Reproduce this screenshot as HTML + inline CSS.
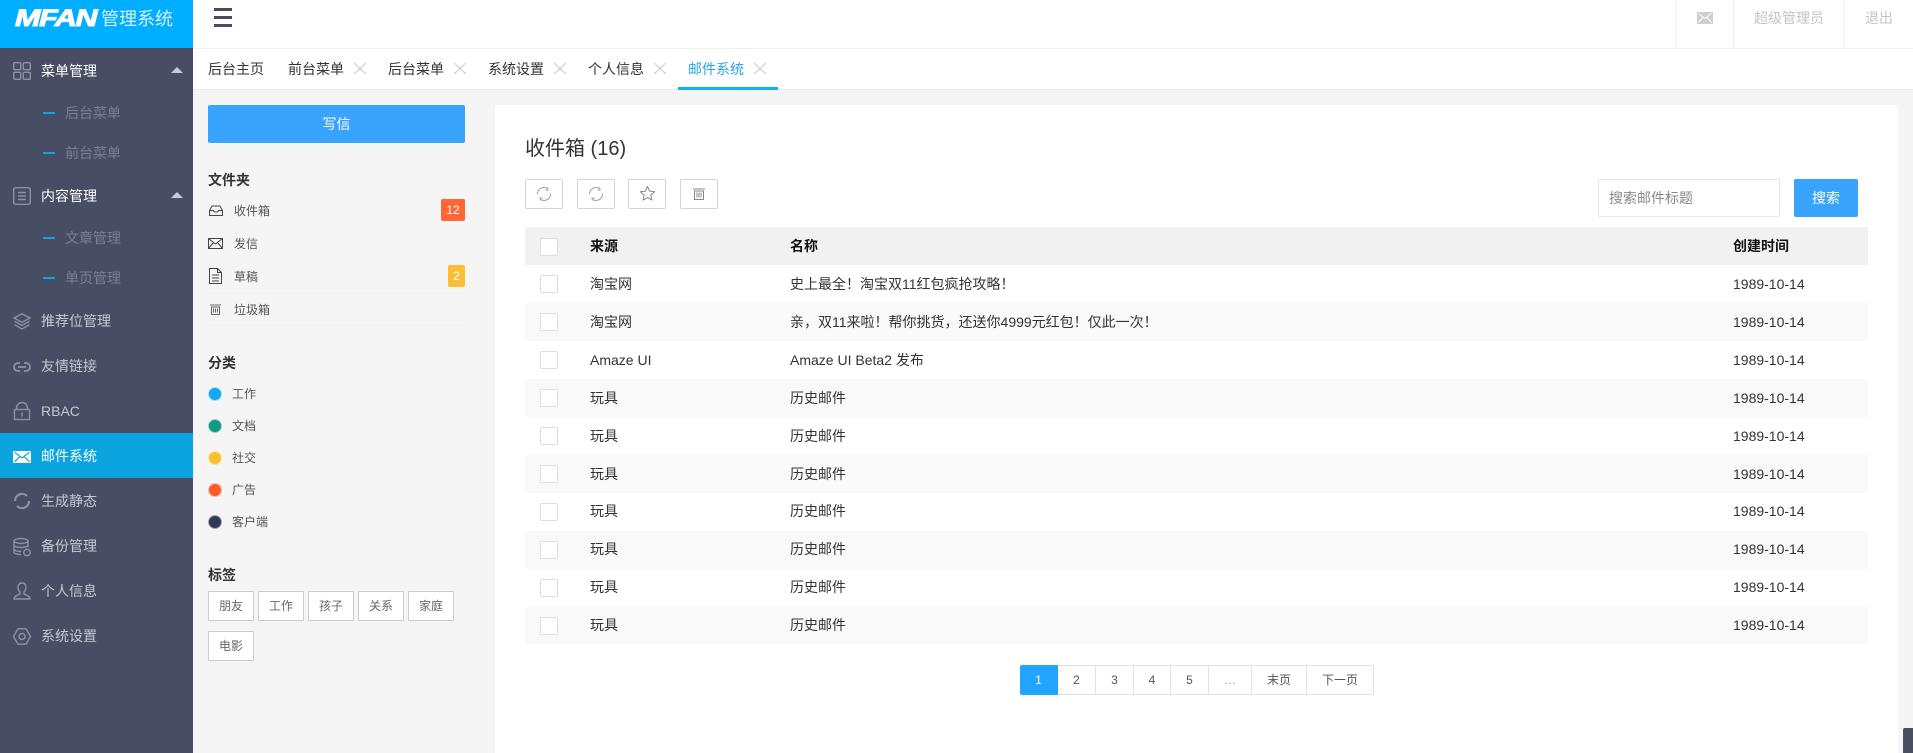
<!DOCTYPE html>
<html lang="zh-CN"><head><meta charset="utf-8"><title>MFAN 管理系统</title>
<style>
*{box-sizing:border-box;margin:0;padding:0}
html,body{width:1913px;height:753px;overflow:hidden;background:#f5f5f5;font-family:"Liberation Sans","Noto Sans CJK SC",sans-serif;font-size:14px;color:#333}
.a{position:absolute}
.t{position:absolute;line-height:20px;height:20px;white-space:nowrap}
svg{position:absolute;overflow:visible;fill:none}
#side{left:0;top:0;width:193px;height:753px;background:#474e64}
#logo{left:0;top:0;width:193px;height:48px;background:#00aeff}
.m{left:41px;color:#c4c8d0;font-size:14px}
.m.w{color:#fff}
.s{left:65px;color:#797f92;font-size:14px}
.d{left:43px;width:12px;height:2px;background:#0ea5de}
.ic{stroke:#8c92a4;stroke-width:1.4}
.tab{top:59px;font-size:14px;color:#333}
.x{stroke:#c8c8c8;stroke-width:1}
.l12{font-size:12px;color:#555}
.h{font-size:14px;font-weight:bold;color:#333;left:208px}
.ln{left:208px;width:257px;height:1px;background:#f2f2f2}
.dot{left:208px;width:14px;height:14px;border-radius:50%;border:1px solid #f5f5f5;outline:0}
.tag{width:46px;height:30px;border:1px solid #ccc;background:#fff;color:#666;font-size:12px;text-align:center;line-height:28px;border-radius:1px}
.btn{top:179px;width:38px;height:30px;border:1px solid #d5d5d5;background:#fff;border-radius:2px}
.row{left:525px;width:1343px;height:38px}
.cb{left:540px;width:18px;height:18px;border:1px solid #dedede;background:#fff;border-radius:2px}
.c1{left:590px}.c2{left:790px}.c3{left:1733px}
.p{top:665px;height:30px;line-height:28px;text-align:center;font-size:12px;color:#555;background:#fff;border:1px solid #e2e2e2;border-left:0}
</style></head><body>

<div class="a" style="left:193px;top:0;width:1720px;height:48px;background:#fff"></div>
<div class="a" style="left:193px;top:48px;width:1720px;height:1px;background:#f0f0f0"></div>
<div class="a" style="left:193px;top:49px;width:1720px;height:40px;background:#fff"></div>
<div class="a" style="left:193px;top:89px;width:1720px;height:1px;background:#ededed"></div>

<!-- sidebar -->
<div class="a" id="side"></div>
<div class="a" id="logo"></div>
<div class="a" style="left:15px;top:5px;height:28px;line-height:28px;color:#fff;font-weight:bold;font-style:italic;font-size:24px;-webkit-text-stroke:1px #fff;transform:scaleX(1.27);transform-origin:0 50%;letter-spacing:-1px">MFAN</div>
<div class="t" style="left:101px;top:9px;font-size:18px;line-height:20px;color:#d8f1ff">管理系统</div>

<svg style="left:13px;top:62px" width="18" height="18" class="ic"><rect x=".7" y=".7" width="7" height="7" rx="1"/><rect x="10.300" y=".7" width="7" height="7" rx="1"/><rect x=".7" y="10.300" width="7" height="7" rx="1"/><rect x="10.300" y="10.300" width="7" height="7" rx="1"/></svg>
<div class="t m w" style="top:61px">菜单管理</div>
<div class="a" style="left:171px;top:67px;border:6px solid transparent;border-top:0;border-bottom:6px solid #c9ccd3"></div>
<div class="a d" style="top:112px"></div><div class="t s" style="top:103px">后台菜单</div>
<div class="a d" style="top:152px"></div><div class="t s" style="top:143px">前台菜单</div>
<svg style="left:13px;top:187px" width="18" height="18" class="ic"><rect x=".7" y=".7" width="16.600" height="16.600" rx="2"/><path d="M5 5.500h8M5 9h8M5 12.500h8"/></svg>
<div class="t m w" style="top:186px">内容管理</div>
<div class="a" style="left:171px;top:192px;border:6px solid transparent;border-top:0;border-bottom:6px solid #c9ccd3"></div>
<div class="a d" style="top:237px"></div><div class="t s" style="top:228px">文章管理</div>
<div class="a d" style="top:277px"></div><div class="t s" style="top:268px">单页管理</div>

<svg style="left:13px;top:313px" width="18" height="17" class="ic"><path d="M9 .8l8 4.200-8 4.200-8-4.200z"/><path d="M1.500 8.200L9 12.400l7.500-4.200M1.500 11.700L9 16l7.500-4.300"/></svg>
<div class="t m" style="top:311px">推荐位管理</div>
<svg style="left:13px;top:362px" width="18" height="10" class="ic"><path style="stroke-width:1.800" d="M7 1H5a4 4 0 0 0 0 8h2M11 1h2a4 4 0 0 1 0 8h-2M5 5h8"/></svg>
<div class="t m" style="top:356px">友情链接</div>
<svg style="left:14px;top:402px" width="16" height="18" class="ic"><rect x=".5" y="7.500" width="15" height="10"/><path d="M2.500 7.500V6a5.500 5.500 0 0 1 11 0v1.500M8 10.500v4"/></svg>
<div class="t m" style="top:401px">RBAC</div>
<div class="a" style="left:0;top:433px;width:193px;height:45px;background:#0ba4de"></div>
<svg style="left:13px;top:451px" width="18" height="12"><rect width="18" height="12" rx="1" fill="#fff"/><path d="M1.500 1.200L9 7l7.500-5.800M1.500 10.800L7 5.500M16.500 10.800L11 5.500" stroke="#0ba4de" stroke-width="1.200"/></svg>
<div class="t m w" style="top:446px">邮件系统</div>
<svg style="left:14px;top:493px" width="16" height="16" class="ic"><path style="stroke-width:2.200" d="M1 8A7 7 0 0 1 13 3M15 8A7 7 0 0 1 3 13"/></svg>
<div class="t m" style="top:491px">生成静态</div>
<svg style="left:13px;top:538px" width="18" height="19" class="ic"><ellipse cx="8" cy="3" rx="7" ry="2.500"/><path d="M1 3v11c0 1.500 3 2.500 7 2.500M15 3v6M1 7c0 1.500 3 2.500 7 2.500S15 8.500 15 7M1 11c0 1.500 3 2.500 7 2.500"/><circle cx="14" cy="14.500" r="3.200"/></svg>
<div class="t m" style="top:536px">备份管理</div>
<svg style="left:13px;top:582px" width="18" height="18" class="ic"><path d="M9 1c-2.800 0-4 2-4 4.500 0 2 1 3.500 2 4.500v2c-2 1-6 2-6 5h16c0-3-4-4-6-5v-2c1-1 2-2.500 2-4.500C13 3 11.800 1 9 1z"/></svg>
<div class="t m" style="top:581px">个人信息</div>
<svg style="left:13px;top:628px" width="18" height="17" class="ic"><path d="M5 .8h8l4.500 7.700L13 16.200H5L.5 8.500z" stroke-linejoin="round"/><circle cx="9" cy="8.500" r="3"/></svg>
<div class="t m" style="top:626px">系统设置</div>

<!-- topbar -->
<div class="a" style="left:214px;top:8px;width:18px;height:3px;background:#474e64"></div>
<div class="a" style="left:214px;top:16px;width:18px;height:3px;background:#474e64"></div>
<div class="a" style="left:214px;top:24px;width:18px;height:3px;background:#474e64"></div>
<div class="a" style="left:1676px;top:0;width:1px;height:48px;background:#f0f0f0"></div>
<div class="a" style="left:1733px;top:0;width:1px;height:48px;background:#f0f0f0"></div>
<div class="a" style="left:1844px;top:0;width:1px;height:48px;background:#f0f0f0"></div>
<svg style="left:1697px;top:12px" width="16" height="12"><rect width="16" height="12" rx="1" fill="#cfcfcf"/><path d="M1.500 1.500L8 6.500l6.500-5M1.500 10.500L6 5.500M14.500 10.500L10 5.500" stroke="#fff" stroke-width="1"/></svg>
<div class="t" style="left:1754px;top:8px;color:#c4c4c4">超级管理员</div>
<div class="t" style="left:1865px;top:8px;color:#c4c4c4">退出</div>

<!-- tabs -->
<div class="t tab" style="left:208px">后台主页</div>
<div class="t tab" style="left:288px">前台菜单</div>
<div class="t tab" style="left:388px">后台菜单</div>
<div class="t tab" style="left:488px">系统设置</div>
<div class="t tab" style="left:588px">个人信息</div>
<div class="t tab" style="left:688px;color:#23a5e8">邮件系统</div>
<svg class="x" style="left:354px;top:63px" width="12" height="11"><path d="M0 0l12 11M12 0L0 11"/></svg>
<svg class="x" style="left:454px;top:63px" width="12" height="11"><path d="M0 0l12 11M12 0L0 11"/></svg>
<svg class="x" style="left:554px;top:63px" width="12" height="11"><path d="M0 0l12 11M12 0L0 11"/></svg>
<svg class="x" style="left:654px;top:63px" width="12" height="11"><path d="M0 0l12 11M12 0L0 11"/></svg>
<svg class="x" style="left:754px;top:63px" width="12" height="11"><path d="M0 0l12 11M12 0L0 11"/></svg>
<div class="a" style="left:678px;top:87px;width:100px;height:3px;background:#0db4f0"></div>

<!-- mail left column -->
<div class="a" style="left:208px;top:105px;width:257px;height:38px;background:#38a4fe;border-radius:2px;color:#fff;text-align:center;line-height:38px">写信</div>
<div class="t h" style="top:170px">文件夹</div>
<svg style="left:209px;top:205px" width="14" height="11" stroke="#444" stroke-width="1"><path d="M.5 5.500L3 1h8l2.500 4.500v5H.5zM.5 5.500h4c0 2 5 2 5 0h4"/></svg>
<div class="t l12" style="left:234px;top:201px">收件箱</div>
<div class="a" style="left:441px;top:199px;width:24px;height:22px;background:#ff6636;border-radius:2px;color:#fff;font-size:12px;text-align:center;line-height:22px">12</div>
<div class="a ln" style="top:227px"></div>
<svg style="left:208px;top:238px" width="15" height="11" stroke="#444" stroke-width="1"><rect x=".5" y=".5" width="14" height="10"/><path d="M.5 .5L7.500 6l7-5.500M.5 10.500L5.500 4.500M14.500 10.500L9.500 4.500"/></svg>
<div class="t l12" style="left:234px;top:234px">发信</div>
<div class="a ln" style="top:260px"></div>
<svg style="left:209px;top:268px" width="13" height="16" stroke="#444" stroke-width="1"><path d="M.5 .5h8l4 4v11H.5zM8.500 .5v4h4M3 7h7M3 10h7M3 13h7"/></svg>
<div class="t l12" style="left:234px;top:267px">草稿</div>
<div class="a" style="left:448px;top:265px;width:17px;height:22px;background:#fbbd33;border-radius:2px;color:#fff;font-size:12px;text-align:center;line-height:22px">2</div>
<div class="a ln" style="top:293px"></div>
<svg style="left:210px;top:304px" width="11" height="11" stroke="#666" stroke-width="1"><path d="M0 1h11M1.500 3h8v7.500h-8zM3.500 4.500v4M5.500 4.500v4M7.500 4.500v4"/></svg>
<div class="t l12" style="left:234px;top:300px">垃圾箱</div>
<div class="a ln" style="top:325px"></div>

<div class="t h" style="top:353px">分类</div>
<div class="a dot" style="top:387px;background:#15a9f4;border-color:#a5dbf7"></div><div class="t l12" style="left:232px;top:384px">工作</div>
<div class="a dot" style="top:419px;background:#0f9a85;border-color:#9fd0c9"></div><div class="t l12" style="left:232px;top:416px">文档</div>
<div class="a dot" style="top:451px;background:#fbbf2d;border-color:#fbe3a8"></div><div class="t l12" style="left:232px;top:448px">社交</div>
<div class="a dot" style="top:483px;background:#ff5a2a;border-color:#fbb9a5"></div><div class="t l12" style="left:232px;top:480px">广告</div>
<div class="a dot" style="top:515px;background:#2f3a55;border-color:#a5a9b5"></div><div class="t l12" style="left:232px;top:512px">客户端</div>

<div class="t h" style="top:565px">标签</div>
<div class="a tag" style="left:208px;top:591px">朋友</div>
<div class="a tag" style="left:258px;top:591px">工作</div>
<div class="a tag" style="left:308px;top:591px">孩子</div>
<div class="a tag" style="left:358px;top:591px">关系</div>
<div class="a tag" style="left:408px;top:591px">家庭</div>
<div class="a tag" style="left:208px;top:631px">电影</div>

<!-- main card -->
<div class="a" style="left:495px;top:105px;width:1403px;height:648px;background:#fff;border-radius:3px 3px 0 0"></div>
<div class="t" style="left:525px;top:136px;font-size:20px;line-height:26px;height:26px;color:#333">收件箱 (16)</div>

<div class="a btn" style="left:525px"></div>
<svg style="left:537px;top:187px" width="14" height="14" stroke="#999" stroke-width="1"><path d="M.5 7A6.500 6.500 0 0 1 10 1.300M13.500 7A6.500 6.500 0 0 1 4 12.700M10.500 .5l.5 2.500-2.500.3M3.500 13.500L3 11l2.500-.3"/></svg>
<div class="a btn" style="left:577px"></div>
<svg style="left:589px;top:187px" width="14" height="14" stroke="#999" stroke-width="1"><path d="M.5 7A6.500 6.500 0 0 1 10 1.300M13.500 7A6.500 6.500 0 0 1 4 12.700M10.500 .5l.5 2.500-2.500.3M3.500 13.500L3 11l2.500-.3"/></svg>
<div class="a btn" style="left:628px"></div>
<svg style="left:640px;top:186px" width="15" height="15" stroke="#888" stroke-width="1" stroke-linejoin="round"><path d="M7.500 .5l2.100 4.600 5 .6-3.700 3.400 1 5-4.400-2.500-4.400 2.500 1-5L.4 5.700l5-.6z"/></svg>
<div class="a btn" style="left:680px"></div>
<svg style="left:693px;top:188px" width="12" height="12" stroke="#888" stroke-width="1"><path d="M0 1h12M1.500 3h9v8.500h-9zM4 4.500v5M6 4.500v5M8 4.500v5"/></svg>

<div class="a" style="left:1598px;top:179px;width:182px;height:38px;border:1px solid #e6e6e6;background:#fff;border-radius:2px;color:#888;line-height:36px;padding-left:10px">搜索邮件标题</div>
<div class="a" style="left:1794px;top:179px;width:64px;height:38px;background:#38a4fe;border-radius:2px;color:#fff;text-align:center;line-height:38px">搜索</div>

<!-- table -->
<div class="a row" style="top:227px;background:#f1f1f1"></div>
<div class="a cb" style="top:238px"></div>
<div class="t c1" style="top:236px;font-weight:bold;color:#111">来源</div>
<div class="t c2" style="top:236px;font-weight:bold;color:#111">名称</div>
<div class="t c3" style="top:236px;font-weight:bold;color:#111">创建时间</div>

<div class="a cb" style="top:275px"></div><div class="t c1" style="top:274px">淘宝网</div><div class="t c2" style="top:274px">史上最全！淘宝双11红包疯抢攻略！</div><div class="t c3" style="top:274px">1989-10-14</div>

<div class="a row" style="top:303px;background:#f9f9f9"></div>
<div class="a cb" style="top:313px"></div><div class="t c1" style="top:312px">淘宝网</div><div class="t c2" style="top:312px">亲，双11来啦！帮你挑货，还送你4999元红包！仅此一次！</div><div class="t c3" style="top:312px">1989-10-14</div>

<div class="a cb" style="top:351px"></div><div class="t c1" style="top:350px">Amaze UI</div><div class="t c2" style="top:350px">Amaze UI Beta2 发布</div><div class="t c3" style="top:350px">1989-10-14</div>

<div class="a row" style="top:379px;background:#f9f9f9"></div>
<div class="a cb" style="top:389px"></div><div class="t c1" style="top:388px">玩具</div><div class="t c2" style="top:388px">历史邮件</div><div class="t c3" style="top:388px">1989-10-14</div>

<div class="a cb" style="top:427px"></div><div class="t c1" style="top:426px">玩具</div><div class="t c2" style="top:426px">历史邮件</div><div class="t c3" style="top:426px">1989-10-14</div>

<div class="a row" style="top:455px;background:#f9f9f9"></div>
<div class="a cb" style="top:465px"></div><div class="t c1" style="top:464px">玩具</div><div class="t c2" style="top:464px">历史邮件</div><div class="t c3" style="top:464px">1989-10-14</div>

<div class="a cb" style="top:503px"></div><div class="t c1" style="top:501px">玩具</div><div class="t c2" style="top:501px">历史邮件</div><div class="t c3" style="top:501px">1989-10-14</div>

<div class="a row" style="top:531px;background:#f9f9f9"></div>
<div class="a cb" style="top:541px"></div><div class="t c1" style="top:539px">玩具</div><div class="t c2" style="top:539px">历史邮件</div><div class="t c3" style="top:539px">1989-10-14</div>

<div class="a cb" style="top:579px"></div><div class="t c1" style="top:577px">玩具</div><div class="t c2" style="top:577px">历史邮件</div><div class="t c3" style="top:577px">1989-10-14</div>

<div class="a row" style="top:607px;background:#f9f9f9;height:37px"></div>
<div class="a cb" style="top:617px"></div><div class="t c1" style="top:615px">玩具</div><div class="t c2" style="top:615px">历史邮件</div><div class="t c3" style="top:615px">1989-10-14</div>

<!-- pagination -->
<div class="a p" style="left:1020px;width:38px;background:#23a5ff;border-color:#23a5ff;color:#fff;border-radius:2px 0 0 2px">1</div>
<div class="a p" style="left:1058px;width:38px">2</div>
<div class="a p" style="left:1096px;width:38px">3</div>
<div class="a p" style="left:1134px;width:37px">4</div>
<div class="a p" style="left:1171px;width:38px">5</div>
<div class="a p" style="left:1209px;width:43px;color:#999">…</div>
<div class="a p" style="left:1252px;width:55px">末页</div>
<div class="a p" style="left:1307px;width:67px;border-radius:0 2px 2px 0">下一页</div>

<div class="a" style="left:1903px;top:728px;width:10px;height:25px;background:#4a5060;border-radius:2px 0 0 0"></div>
</body></html>
